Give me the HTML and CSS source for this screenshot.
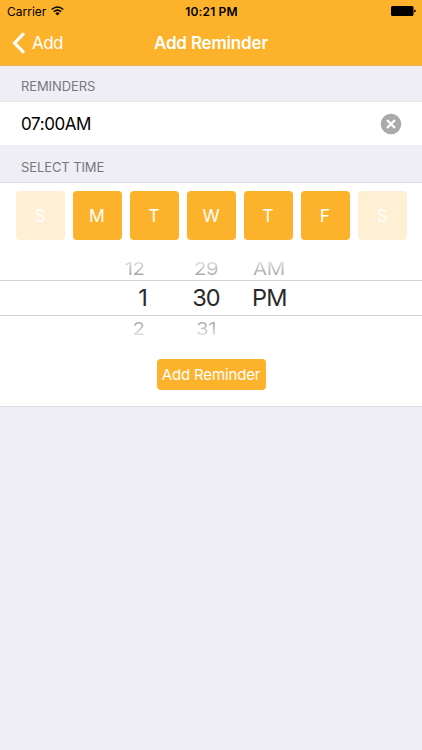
FILE: index.html
```html
<!DOCTYPE html>
<html lang="en">
<head>
<meta charset="utf-8">
<title>Add Reminder</title>
<link rel="stylesheet" href="styles.css">
</head>
<body>
<header class="top">
  <div class="status">
    <div class="carrier"><span>Carrier</span>
      <svg width="13" height="10" viewBox="0 0 13 10" fill="none" stroke="#000" stroke-width="1.5"><path d="M.7 3.5Q6.5-1.6 12.3 3.5M2.8 5.7Q6.5 2.5 10.2 5.7"/><path d="M4.3 7.2Q6.5 5.4 8.7 7.2L6.5 9.4Z" fill="#000" stroke="none"/></svg>
    </div>
    <span class="clock">10:21 PM</span>
    <svg class="battery" width="25" height="10" viewBox="0 0 25 10"><rect width="22.5" height="10" rx="1.5"/><path d="M23.2 3.4Q24.8 3.6 24.8 5T23.2 6.6Z"/></svg>
  </div>
  <nav class="nav">
    <div class="back">
      <svg width="13" height="22" viewBox="0 0 13 22" fill="none" stroke="#fff" stroke-width="3.2"><path d="M11.9 1.3L2.6 11L11.9 20.7"/></svg>
      <span>Add</span>
    </div>
    <h1>Add Reminder</h1>
    <div></div>
  </nav>
</header>
<main>
  <h2 class="first">REMINDERS</h2>
  <div class="row">
    <span>07:00AM</span>
    <svg width="22" height="22" viewBox="0 0 22 22"><circle cx="11" cy="11" r="10.3" fill="#aaa"/><path d="M7 7L15 15M15 7L7 15" stroke="#fff" stroke-width="2.3"/></svg>
  </div>
  <h2 class="second">SELECT TIME</h2>
  <section class="panel">
    <div class="days">
      <span class="day off">S</span><span class="day">M</span><span class="day">T</span><span class="day">W</span><span class="day">T</span><span class="day">F</span><span class="day off">S</span>
    </div>
    <div class="picker">
      <div class="line above"><span>12</span><span>29</span><span>AM</span></div>
      <div class="line current"><span>1</span><span>30</span><span>PM</span></div>
      <div class="line below"><span>2</span><span>31</span><span></span></div>
    </div>
    <button class="add">Add Reminder</button>
  </section>
</main>
</body>
</html>
```
FILE: styles.css
```css
* { box-sizing: border-box; }
body {
  margin: 0;
  height: 750px;
  background: #efeef4;
  font-family: Inter, "Liberation Sans", sans-serif;
  color: #000;
  overflow: hidden;
}
svg { display: block; flex: none; }
.top {
  height: 66px;
  background: #fdb22b;
  border-bottom: 1px solid #e9b35a;
}
.status {
  height: 22px;
  display: grid;
  grid-template-columns: 1fr auto 1fr;
  align-items: center;
  padding: 0 6px 0 7px;
  font-size: 12px;
}
.carrier { display: flex; align-items: center; gap: 5px; letter-spacing: 0; }
.clock { font-weight: 600; letter-spacing: 0.15px; }
.battery { justify-self: end; }
.nav {
  height: 42px;
  display: grid;
  grid-template-columns: 1fr auto 1fr;
  align-items: center;
  padding: 0 12px;
  color: #fff;
  font-size: 17px;
}
.back { display: flex; align-items: center; gap: 7px; letter-spacing: -0.6px; }
h1 { margin: 0; font-size: 17px; font-weight: 600; letter-spacing: -0.18px; }
h2 {
  margin: 0;
  padding-left: 21px;
  font-size: 13px;
  line-height: 18px;
  font-weight: 400;
  color: #77777c;
  letter-spacing: -0.1px;
}
.first { height: 36px; padding-top: 11px; border-bottom: 1px solid #e8e7ec; }
.second { height: 37px; padding-top: 13px; }
.row {
  height: 43px;
  background: #fff;
  display: flex;
  align-items: center;
  justify-content: space-between;
  padding: 0 20px 0 21px;
  font-size: 17px;
  letter-spacing: -0.4px;
}
.panel {
  height: 225px;
  background: #fff;
  border-top: 1px solid #dddce2;
  border-bottom: 1px solid #dddce2;
  display: flex;
  flex-direction: column;
  align-items: center;
}
.days { display: flex; gap: 8px; padding-top: 8px; }
.day {
  width: 49px;
  height: 49px;
  border-radius: 4px;
  background: #fdb22b;
  color: #fff;
  font-size: 17.5px;
  display: flex;
  align-items: center;
  justify-content: center;
}
.off { background: #ffefd5; }
.picker { width: 100%; margin-top: 16px; }
.line {
  display: grid;
  grid-template-columns: 147px 118px 1fr;
  align-items: center;
}
.line span:nth-child(1) { text-align: right; }
.line span:nth-child(2) { text-align: center; }
.line span:nth-child(3) { margin-left: -13px; }
.current {
  height: 36px;
  padding-bottom: 2px;
  border-top: 1px solid #d4d4d4;
  border-bottom: 1px solid #d4d4d4;
  font-size: 23.5px;
  letter-spacing: -0.8px;
  color: #2a2a2a;
}
.above, .below {
  height: 24px;
  font-size: 20.5px;
  letter-spacing: -0.5px;
}
.above { padding-bottom: 2px; }
.above span, .below span {
  transform: scaleY(0.84);
  color: transparent;
  background-clip: text;
  -webkit-background-clip: text;
}
.above span { background-image: linear-gradient(#e2e2e2 15%, #a4a4a4 85%); }
.below span { background-image: linear-gradient(#a4a4a4 15%, #e2e2e2 85%); }
.above span:first-child, .below span:first-child { padding-right: 2.5px; }
.above span:nth-child(3) { margin-left: -12px; }
.add {
  width: 109px;
  height: 31px;
  margin-top: 19px;
  padding: 0;
  border: 0;
  border-radius: 4px;
  background: #fdb22b;
  color: #fff;
  font: 400 15px Inter, sans-serif;
  letter-spacing: -0.15px;
}
```
